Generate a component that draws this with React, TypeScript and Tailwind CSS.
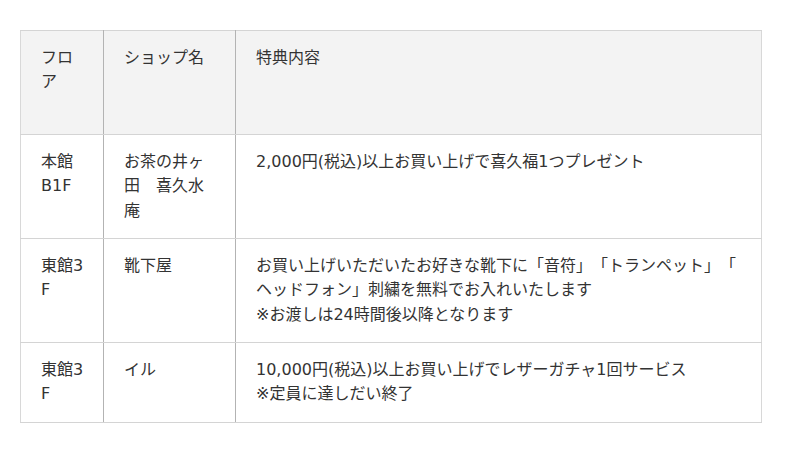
const CJK = { fontFamily: '"Noto Sans CJK JP", sans-serif' };

// brackets take the CJK full-width glyph, as in the reference
function Text({ s }: { s: string }) {
  const parts = s.split(/([「」])/);
  return (
    <>
      {parts.map((p, i) =>
        p === "「" || p === "」" ? (
          <span key={i} className="leading-none" style={CJK}>
            {p}
          </span>
        ) : (
          p
        )
      )}
    </>
  );
}

const ROWS = [
  {
    floor: "本館B1F",
    shop: "お茶の井ヶ田　喜久水庵",
    perk: ["2,000円(税込)以上お買い上げで喜久福1つプレゼント"],
  },
  {
    floor: "東館3F",
    shop: "靴下屋",
    perk: [
      "お買い上げいただいたお好きな靴下に「音符」「トランペット」「ヘッドフォン」刺繍を無料でお入れいたします",
      "※お渡しは24時間後以降となります",
    ],
  },
  {
    floor: "東館3F",
    shop: "イル",
    perk: ["10,000円(税込)以上お買い上げでレザーガチャ1回サービス", "※定員に達しだい終了"],
  },
];

const cell = "align-top pl-5 py-[15px] [line-break:anywhere] border-y border-[#d4d4d4]";
const divider = "border-r border-r-[#b3b3b3]";

export default function App() {
  return (
    <div
      className="w-[800px] h-[452px] bg-white pt-[30px] pl-[20px] text-[16px] leading-[24.33px] text-[#333] [text-spacing-trim:space-all]"
      style={{ fontFamily: '"DejaVu Sans", "Noto Sans CJK JP", sans-serif' }}
    >
      <table className="w-[742px] table-fixed border-collapse border border-[#d8d8d8]">
        <colgroup>
          <col className="w-[83px]" />
          <col className="w-[132px]" />
          <col />
        </colgroup>
        <thead>
          <tr className="h-[104px] bg-[#f3f3f3]">
            <th className={`${cell} ${divider} pr-[19.5px] text-left font-normal`}>フロア</th>
            <th className={`${cell} ${divider} pr-5 text-left font-normal`}>ショップ名</th>
            <th className={`${cell} pr-5 text-left font-normal`}>特典内容</th>
          </tr>
        </thead>
        <tbody>
          {ROWS.map((r, i) => (
            <tr key={i}>
              <td className={`${cell} ${divider} pr-[19.5px]`}>{r.floor}</td>
              <td className={`${cell} ${divider} pr-5`}>{r.shop}</td>
              <td className={`${cell} pr-5`}>
                {r.perk.map((p) => (
                  <div key={p}>
                    <Text s={p} />
                  </div>
                ))}
              </td>
            </tr>
          ))}
        </tbody>
      </table>
    </div>
  );
}
